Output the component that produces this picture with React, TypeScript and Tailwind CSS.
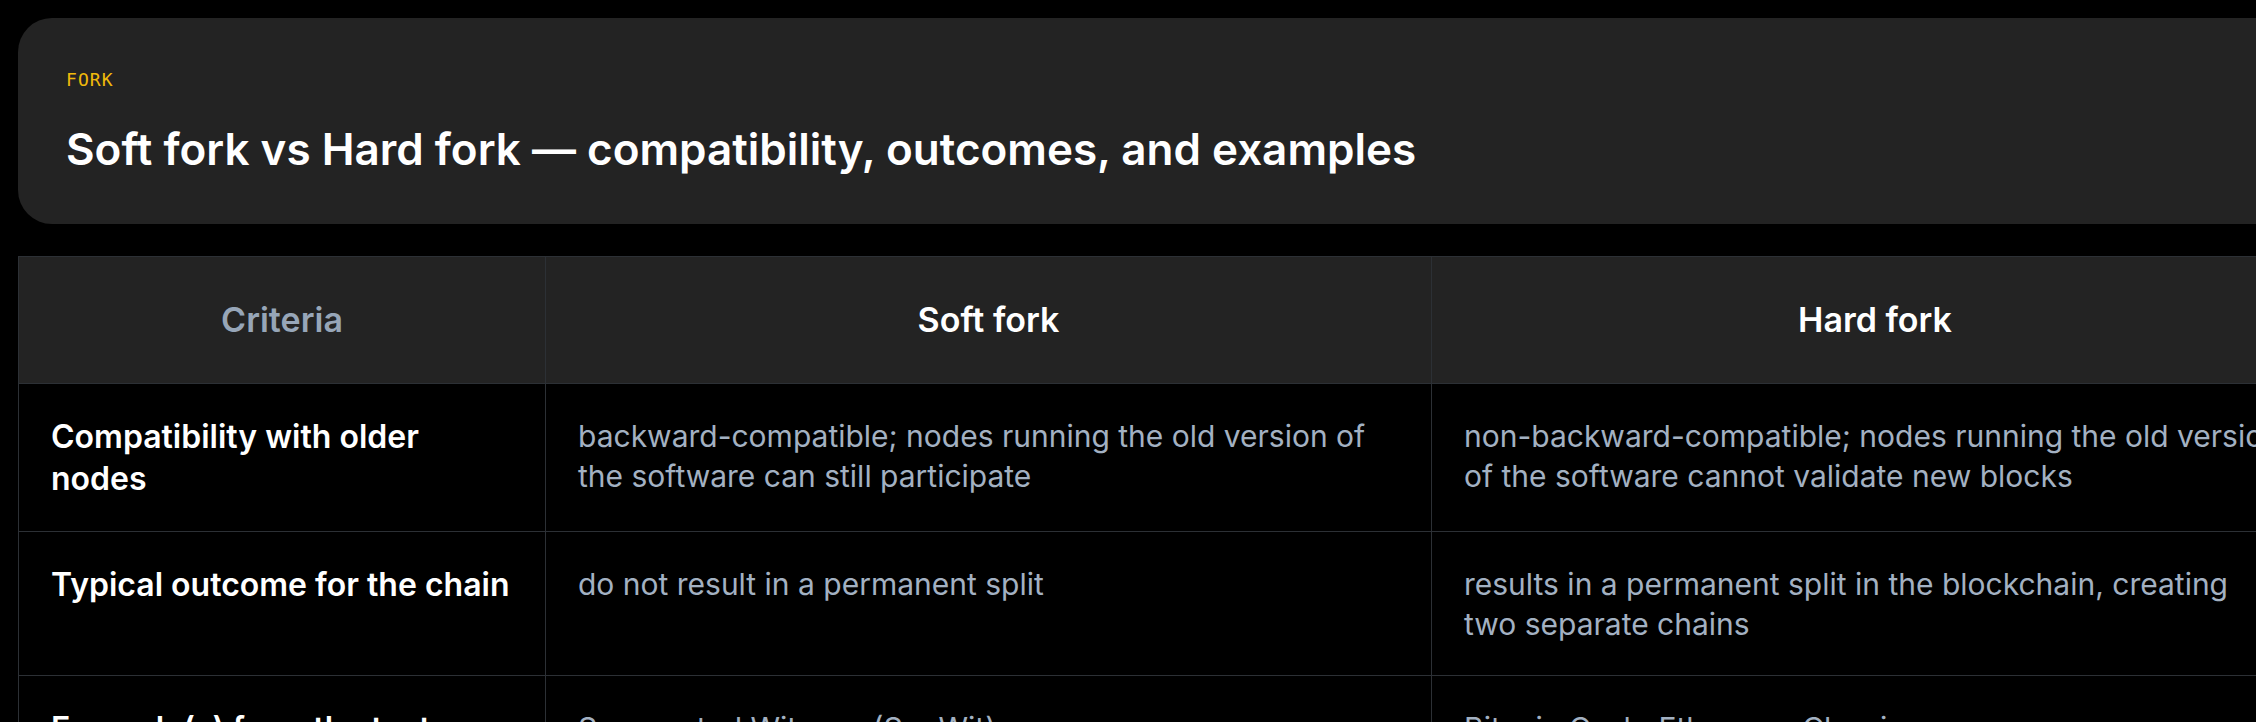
type Row = {
  criteria: string;
  soft: string;
  hard: string;
};

const rows: Row[] = [
  {
    criteria: "Compatibility with older nodes",
    soft: "backward-compatible; nodes running the old version of the software can still participate",
    hard: "non-backward-compatible; nodes running the old version of the software cannot validate new blocks",
  },
  {
    criteria: "Typical outcome for the chain",
    soft: "do not result in a permanent split",
    hard: "results in a permanent split in the blockchain, creating two separate chains",
  },
  {
    criteria: "Example(s) from the text",
    soft: "Segregated Witness (SegWit)",
    hard: "Bitcoin Cash, Ethereum Classic",
  },
];

const App = () => {
  return (
    <div className="w-[2256px] h-[722px] overflow-hidden bg-black font-['Inter','Noto_Sans',sans-serif]">
      <div className="w-[2336px] px-[18px] pt-[18px]">
        {/* header card */}
        <div className="rounded-[34px] bg-[#232323] px-12 pt-12 pb-[49px]">
          <div className="font-['DejaVu_Sans_Mono','Liberation_Mono',monospace] text-[18px] leading-7 tracking-[0.06em] text-[#f0b90b]">
            FORK
          </div>
          <h1 className="mt-[30px] text-[44px] font-semibold leading-[1.15] text-white">
            Soft fork vs Hard fork — compatibility, outcomes, and examples
          </h1>
        </div>

        <table className="mt-8 w-[2300px] table-fixed border-collapse border border-[#2c3035]">
          <colgroup>
            <col className="w-[527px]" />
            <col className="w-[886px]" />
            <col className="w-[887px]" />
          </colgroup>
          <thead>
            <tr className="bg-[#232323]">
              <th className="border border-[#2c3035] px-8 py-10 text-center text-[34px] font-semibold leading-[46px] text-[#97a6b8]">
                Criteria
              </th>
              <th className="border border-[#2c3035] px-8 py-10 text-center text-[34px] font-semibold leading-[46px] text-white">
                Soft fork
              </th>
              <th className="border border-[#2c3035] px-8 py-10 text-center text-[34px] font-semibold leading-[46px] text-white">
                Hard fork
              </th>
            </tr>
          </thead>
          <tbody>
            {rows.map((r) => (
              <tr key={r.criteria} className="bg-black">
                <td className="border border-[#2c3035] px-8 pt-8 pb-[31px] align-top text-[32px] font-semibold leading-[42px] text-white">
                  {r.criteria}
                </td>
                <td className="border border-[#2c3035] px-8 pt-8 pb-[31px] align-top text-[30px] leading-10 text-[#a3b1c2]">
                  {r.soft}
                </td>
                <td className="border border-[#2c3035] px-8 pt-8 pb-[31px] align-top text-[30px] leading-10 text-[#a3b1c2]">
                  {r.hard}
                </td>
              </tr>
            ))}
          </tbody>
        </table>
      </div>
    </div>
  );
};

export default App;
